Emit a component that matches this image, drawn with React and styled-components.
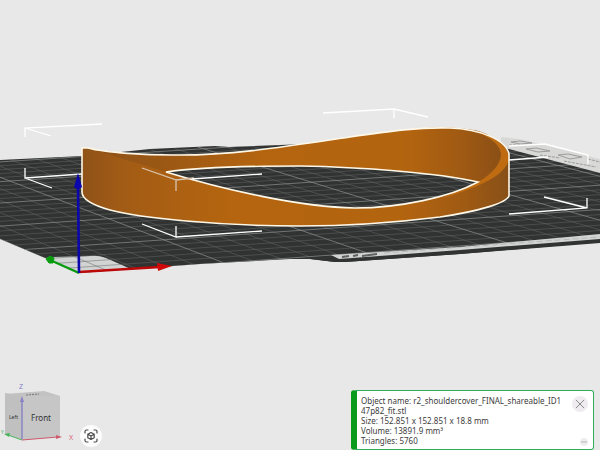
import React from 'react'
import styled, { createGlobalStyle } from 'styled-components'

const GlobalStyle = createGlobalStyle`
  * {
    box-sizing: border-box;
  }

  body {
    margin: 0;
    background: #e8e8e8;
    color: #3c3c3c;
    font-family: 'Noto Sans', 'Open Sans', sans-serif;
  }
`

const Viewport = styled.main`
  display: grid;
  min-height: 100vh;
  overflow: hidden;
`

const Scene = styled.svg`
  grid-area: 1 / 1;
  width: 100%;
  height: 100vh;
`

const Hud = styled.div`
  grid-area: 1 / 1;
  align-self: end;
  display: flex;
  justify-content: space-between;
  align-items: flex-end;
  z-index: 1;
`

const ViewControls = styled.div`
  display: flex;
  align-items: flex-end;
  gap: 4px;
`

const Cube = styled.svg`
  display: block;
  width: 76px;
  height: 70px;
`

const CubeLabel = styled.text`
  fill: ${({ $color }) => $color || '#333'};
  font-size: ${({ $size }) => $size || 8}px;
`

const FitButton = styled.button`
  display: flex;
  align-items: center;
  justify-content: center;
  width: 22px;
  height: 22px;
  margin-bottom: 3px;
  padding: 0;
  border: 0;
  border-radius: 50%;
  background: #fcfcfc;
  color: #4a4a4a;
  cursor: pointer;
`

const Notice = styled.section`
  display: flex;
  justify-content: space-between;
  gap: 10px;
  width: 243px;
  margin-right: 6px;
  padding: 5px 5px 3px 4px;
  border: 1px solid #2fae5a;
  border-left: 6px solid #0a9a1c;
  border-radius: 3px;
  background: #fff;
`

const NoticeText = styled.div`
  flex: 1;
  min-width: 0;
  font-size: 8px;
  line-height: 10px;
`

const NoticeLine = styled.p`
  margin: 0;
  word-break: break-all;
`

const NoticeActions = styled.div`
  display: flex;
  flex-direction: column;
  justify-content: space-between;
  align-items: flex-end;
`

const RoundButton = styled.button`
  display: flex;
  align-items: center;
  justify-content: center;
  width: ${({ $size }) => $size}px;
  height: ${({ $size }) => $size}px;
  padding: 0;
  border: 0;
  border-radius: 50%;
  background: #efecef;
  color: ${({ $faint }) => ($faint ? '#b4b4b4' : '#8c8c8c')};
  cursor: pointer;
`

const BED = 256

// screen corners of the build plate: front left, front right, back right, back left
const corners = [
  [79, 273],
  [797, 222],
  [442, 131],
  [-160, 170]
]

// maps bed millimetres to screen coordinates
const createProjection = ([[x0, y0], [x1, y1], [x2, y2], [x3, y3]]) => {
  const dx1 = x1 - x2
  const dx2 = x3 - x2
  const dy1 = y1 - y2
  const dy2 = y3 - y2
  const sx = x0 - x1 + x2 - x3
  const sy = y0 - y1 + y2 - y3
  const det = dx1 * dy2 - dx2 * dy1
  const g = (sx * dy2 - dx2 * sy) / det
  const h = (dx1 * sy - sx * dy1) / det

  return (mmX, mmY) => {
    const u = mmX / BED
    const v = mmY / BED
    const w = g * u + h * v + 1
    return [
      ((x1 - x0 + g * x1) * u + (x3 - x0 + h * x3) * v + x0) / w,
      ((y1 - y0 + g * y1) * u + (y3 - y0 + h * y3) * v + y0) / w
    ]
  }
}

const project = createProjection(corners)
const line = (a, b) => `M${project(...a).join(' ')}L${project(...b).join(' ')}`

const steps = Array.from({ length: 26 }, (_, i) => i * 10)
const gridPath = (values) => values.map((n) => line([n, 0], [n, BED]) + line([0, n], [BED, n])).join('')

const minorGrid = gridPath(steps.filter((n) => n % 50))
const majorGrid = gridPath(steps.filter((n) => n % 50 === 0))

const plateOutline =
  'M-160 170L0 160L82 156L150 149L215 146L229 147L306 144L330 150L490 142L508 142L520 140L600 160V242L460 254L345 262L335 262L310 259L290 259L200 264L79 273L45 258L0 239Z'

const modelOutline = `M82 148L88 148C106 153 148 155 172 155C230 156 290 146 350 137C390 131 420 127 450 128C480 129 506 140 509 154V196C506 203 480 211 440 217C400 222 350 226 300 226C220 226 140 218 110 210C92 205 82 199 82 192Z
  M166 172C200 167 250 166 300 166C360 167 440 173 478 182C450 197 400 208 355 208C300 207 225 190 166 172Z`

const BuildPlate = () => (
  <g>
    <path d={plateOutline} fill='#303332' />
    <path d='M45 258L53 257L90 256Q98 255 106 258L131 269L79 273Z' fill='#d2d3d3' />
    <g clipPath='url(#plate)' fill='none'>
      <path d={minorGrid} stroke='#666968' strokeWidth='0.5' />
      <path d={majorGrid} stroke='#8e9190' strokeWidth='0.7' />
    </g>
    <path d='M501 137L520 139L600 159V173L501 147Z' fill='#d8d8d7' />
    <g stroke='#9b9d9c' fill='none'>
      <path d='M511 142L520 141L532 143L520 144Z M526 149L536 148L550 151L538 152Z' />
      <path d='M558 155L568 154L582 157L570 159Z' />
      <path d='M509 145L526 145M540 155L560 158M564 161L596 167M588 159L600 162' strokeDasharray='3 1' />
    </g>
    <path d='M290 259L332 256L460 247L600 235V243L460 254L345 262L335 262L310 259Z' fill='#303332' />
    <path d='M331 255L460 247L600 234V239L460 250L339 259Z' fill='#d2d4d3' />
    <path d='M342 257L349 256M353 256L358 255M362 256L377 254' stroke='#606261' strokeWidth='2' />
    <path d='M384 253L600 237' stroke='#b8bab9' strokeDasharray='6 3' />
  </g>
)

const Model = () => (
  <g>
    <path fillRule='evenodd' fill='url(#wall)' d={modelOutline} />
    <path
      d='M88 148C106 153 148 155 172 155C200 156 230 154 260 151V166C220 167 190 169 166 172C140 164 110 155 88 148Z'
      fill='url(#backWall)'
    />
    <path d='M409 130C420 127 480 124 492 138C502 146 502 156 498 162C494 170 487 176 478 182C455 177 430 174 409 171Z' fill='url(#innerWall)' />
    <path
      d='M470 130C490 133 509 146 509 157C508 172 490 184 440 199L478 182C492 174 501 164 501 154C500 144 488 135 470 130Z'
      fill='#be6b12'
    />
    <path fill='none' stroke='#fff8e8' strokeWidth='1.6' d={modelOutline} />
  </g>
)

const FitIcon = () => (
  <svg width='14' height='14' viewBox='0 0 14 14' fill='none' stroke='currentColor' strokeWidth='1.2' strokeLinecap='round' strokeLinejoin='round'>
    <path d='M1 4V2.5Q1 1 2.5 1H4M10 1H11.5Q13 1 13 2.5V4M13 10V11.5Q13 13 11.5 13H10M4 13H2.5Q1 13 1 11.5V10' />
    <path d='M7 3.5L10.2 5.2V8.8L7 10.5L3.8 8.8V5.2ZM3.8 5.2L7 7L10.2 5.2M7 7V10.5' />
  </svg>
)

const ViewCube = () => (
  <Cube viewBox='0 380 76 70' role='img' aria-label='View orientation'>
    <path d='M5 394L44 391L60 396L22 397Z' fill='#c2c2c2' />
    <path d='M5 393L22 396V440L5 434Z' fill='#c0c0c0' />
    <path d='M22 396L60 396V437L22 440Z' fill='#c6c6c6' />
    <path d='M26 395L39 394' stroke='#777' strokeDasharray='2 1' />
    <path d='M22 439V400' stroke='#8581c4' strokeWidth='1.4' />
    <path d='M22 396L24 402H20Z' fill='#8581c4' />
    <path d='M22 440L58 437' stroke='#cf5a6d' />
    <path d='M62 437L56 435V439Z' fill='#cf5a6d' />
    <path d='M22 440L8 435' stroke='#4cb45c' />
    <path d='M4 434L10 433L9 437Z' fill='#4cb45c' />
    <CubeLabel x='31' y='421'>Front</CubeLabel>
    <CubeLabel x='9' y='419' $size={5}>Left</CubeLabel>
    <CubeLabel x='19' y='389' $size={7} $color='#8581c4'>Z</CubeLabel>
    <CubeLabel x='69' y='440' $size={7} $color='#d86478'>X</CubeLabel>
    <CubeLabel x='1' y='434' $size={5} $color='#4cb45c'>Y</CubeLabel>
  </Cube>
)

const App = () => (
  <>
    <GlobalStyle />
    <Viewport>
      <Scene viewBox='0 0 600 450' preserveAspectRatio='xMidYMid slice' role='img' aria-label='Build plate'>
        <defs>
          <clipPath id='plate'>
            <path d={plateOutline} />
          </clipPath>
          <linearGradient id='wall' gradientUnits='userSpaceOnUse' x1='82' x2='509' y1='0' y2='0'>
            <stop offset='0' stopColor='#8f5218' />
            <stop offset='0.1' stopColor='#a35c15' />
            <stop offset='0.35' stopColor='#b5650f' />
            <stop offset='0.75' stopColor='#b3640f' />
            <stop offset='0.9' stopColor='#9f5a13' />
            <stop offset='1' stopColor='#875018' />
          </linearGradient>
          <linearGradient id='backWall' gradientUnits='userSpaceOnUse' x1='88' x2='260' y1='0' y2='0'>
            <stop offset='0' stopColor='#8d5117' />
            <stop offset='0.5' stopColor='#9d5914' />
            <stop offset='1' stopColor='#b4640f' />
          </linearGradient>
          <linearGradient id='innerWall' gradientUnits='userSpaceOnUse' x1='409' x2='502' y1='0' y2='0'>
            <stop offset='0' stopColor='#b3640f' />
            <stop offset='0.6' stopColor='#9e5913' />
            <stop offset='1' stopColor='#8a4f16' />
          </linearGradient>
        </defs>
        <BuildPlate />
        <g stroke='#fff' strokeWidth='1.3' fill='none'>
          <path d='M102 124L25 128V137M25 128L51 136' />
          <path d='M25 168V178L82 174M25 178L52 188' />
          <path d='M323 113L394 109V118M394 109L428 117' />
          <path d='M509 160L548 157M588 164V155L545 144L509 146' />
          <path d='M509 214L587 208V198M587 208L544 197' />
        </g>
        <Model />
        <g stroke='#fff' strokeWidth='1.3' fill='none'>
          <path d='M142 168L176 180V191M176 180L194 178' stroke='#d9c5ad' />
          <path d='M192 179L262 174' />
          <path d='M142 224L176 237V226M176 237L262 231' />
        </g>
        <path d='M79 272L160 267' stroke='#bd0808' strokeWidth='2.4' />
        <path d='M157 263L172 266L158 271Z' fill='#cf0909' />
        <path d='M79 273L50 260' stroke='#079b0d' strokeWidth='2.4' />
        <path d='M46 259L50 256L54 258L53 263L49 263Z' fill='#079b0d' stroke='#079b0d' />
        <path d='M79 273L78 185' stroke='#0b07ad' strokeWidth='2.6' />
        <path d='M78 173L82 187Q78 191 74 187Z' fill='#0b07ad' />
      </Scene>
      <Hud>
        <ViewControls>
          <ViewCube />
          <FitButton type='button' aria-label='Fit view'>
            <FitIcon />
          </FitButton>
        </ViewControls>
        <Notice>
          <NoticeText>
            <NoticeLine>Object name: r2_shouldercover_FINAL_shareable_ID147p82_fit.stl</NoticeLine>
            <NoticeLine>Size: 152.851 x 152.851 x 18.8 mm</NoticeLine>
            <NoticeLine>Volume: 13891.9 mm³</NoticeLine>
            <NoticeLine>Triangles: 5760</NoticeLine>
          </NoticeText>
          <NoticeActions>
            <RoundButton $size={16} type='button' aria-label='Close'>
              <svg width='10' height='10' viewBox='0 0 10 10' stroke='currentColor' fill='none'>
                <path d='M1 1L9 9M9 1L1 9' />
              </svg>
            </RoundButton>
            <RoundButton $size={8} $faint type='button' aria-label='Minimise'>
              <svg width='6' height='2' viewBox='0 0 6 2' stroke='currentColor'>
                <path d='M0 1H6' />
              </svg>
            </RoundButton>
          </NoticeActions>
        </Notice>
      </Hud>
    </Viewport>
  </>
)

export default App
